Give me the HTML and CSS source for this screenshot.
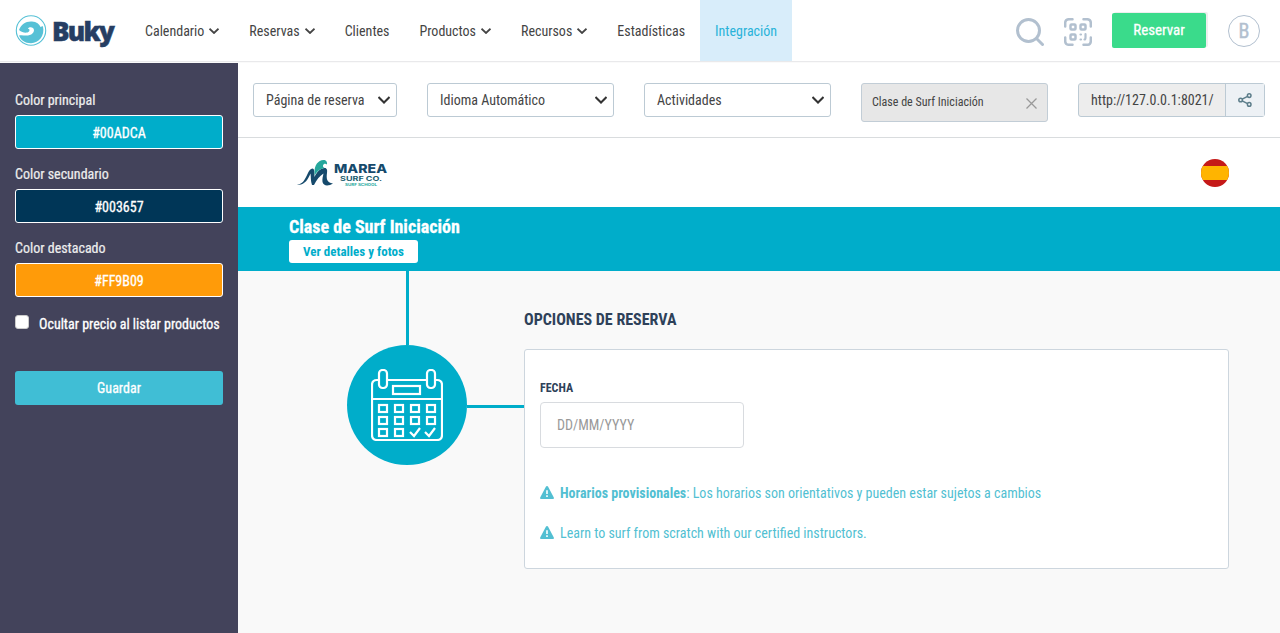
FILE: index.html
```html
<!DOCTYPE html>
<html lang="es">
<head>
    <meta charset="utf-8">
    <title>Buky - Integración</title>
    <link rel="stylesheet" href="styles.css">
</head>
<body>
    <header class="header">
        <a class="brand">
            <svg class="brand-icon" width="32" height="32" viewBox="0 0 32 32">
                <circle cx="16" cy="15.500" r="14.700" fill="none" stroke="#56c1d6" stroke-width="1.100"/>
                <path d="M4 15C6 9.500 11 6 17 6.500C21.500 6.900 24.500 9 25.500 12C26.500 11.500 27.500 11 28 11.500C30 20.500 24 28.200 16 28.200C10 28.200 5.500 25 4 20.500C7 19.500 9.500 21 13 20.500C18 19.800 20.500 15.500 18 13C16.500 11.800 14 12 12.800 13.500C14.500 13.800 15 15.200 14 16.500C12 18.500 7.500 18 4 15Z" fill="#56c1d6"/>
            </svg>
            <span class="brand-name">Buky</span>
        </a>
        <nav class="nav">
            <a class="nav-item">Calendario <svg class="caret" viewBox="0 0 10 6"><path d="M.5.7 5 5 9.500.7"/></svg></a>
            <a class="nav-item">Reservas <svg class="caret" viewBox="0 0 10 6"><path d="M.5.7 5 5 9.500.7"/></svg></a>
            <a class="nav-item">Clientes</a>
            <a class="nav-item">Productos <svg class="caret" viewBox="0 0 10 6"><path d="M.5.7 5 5 9.500.7"/></svg></a>
            <a class="nav-item">Recursos <svg class="caret" viewBox="0 0 10 6"><path d="M.5.7 5 5 9.500.7"/></svg></a>
            <a class="nav-item">Estadísticas</a>
            <a class="nav-item active">Integración</a>
        </nav>
        <div class="actions">
            <svg class="icon-search" width="28" height="28" viewBox="0 0 28 28" fill="none" stroke="#b2c0cf" stroke-width="3" stroke-linecap="round">
                <circle cx="12.500" cy="12.500" r="11"/>
                <path d="M20.500 20.500 26.500 26.500"/>
            </svg>
            <svg class="icon-qr" width="28" height="28" viewBox="0 0 28 28" fill="none" stroke="#b2c0cf" stroke-width="2.500" stroke-linecap="round">
                <path d="M1.200 8.500V5Q1.200 1.200 5 1.200H8.500M19.500 1.200H23Q26.800 1.200 26.800 5V8.500M26.800 19.500V23Q26.800 26.800 23 26.800H19.500M8.500 26.800H5Q1.200 26.800 1.200 23V19.500"/>
                <rect x="6.500" y="6.500" width="5" height="5" rx="1"/>
                <rect x="16.500" y="6.500" width="5" height="5" rx="1"/>
                <rect x="6.500" y="16.500" width="5" height="5" rx="1"/>
                <path d="M16.500 16.500H17M16.500 21.500H17M21.500 16.200V19.500Q21.500 21.500 20.500 21.500" stroke-width="2.200"/>
            </svg>
            <button class="btn-book">Reservar</button>
            <span class="avatar">B</span>
        </div>
    </header>

    <div class="page">
        <aside class="sidebar">
            <label class="color-label">Color principal</label>
            <div class="color-box color-main">#00ADCA</div>
            <label class="color-label">Color secundario</label>
            <div class="color-box color-second">#003657</div>
            <label class="color-label">Color destacado</label>
            <div class="color-box color-highlight">#FF9B09</div>
            <label class="check-row"><input type="checkbox" class="check"><span>Ocultar precio al listar productos</span></label>
            <button class="btn-save">Guardar</button>
        </aside>

        <main class="content">
            <div class="toolbar">
                <div class="select select-page"><span>Página de reserva</span><svg class="select-caret" viewBox="0 0 12 8"><path d="M.5 1 6 6.500 11.500 1"/></svg></div>
                <div class="select"><span>Idioma Automático</span><svg class="select-caret" viewBox="0 0 12 8"><path d="M.5 1 6 6.500 11.500 1"/></svg></div>
                <div class="select"><span>Actividades</span><svg class="select-caret" viewBox="0 0 12 8"><path d="M.5 1 6 6.500 11.500 1"/></svg></div>
                <div class="picked"><span>Clase de Surf Iniciación</span><svg width="11" height="11" viewBox="0 0 11 11"><path d="M.5.500 10.500 10.500M10.500.500.500 10.500" stroke="#999" stroke-width="1.300"/></svg></div>
                <div class="share">
                    <span class="share-url">http://127.0.0.1:8021/</span>
                    <span class="share-btn">
                        <svg width="14" height="14" viewBox="0 0 14 14" fill="none" stroke="#5c7d8a" stroke-width="1.500">
                            <circle cx="2.600" cy="7" r="1.800"/>
                            <circle cx="11.200" cy="2.600" r="1.800"/>
                            <circle cx="11.200" cy="11.400" r="1.800"/>
                            <path d="M4.200 6.200 9.600 3.400M4.200 7.800 9.600 10.600"/>
                        </svg>
                    </span>
                </div>
            </div>

            <div class="shop-head">
                <svg class="shop-logo" width="92" height="30" viewBox="0 0 92 30">
                    <path d="M1 26.500C7 26.500 9 21 11.500 16C13 12.800 14.500 10.500 16.500 10.500C18.500 10.500 18.500 14 18.500 19C21 13.500 24 10.800 28 10C31 9.500 31.500 12 31 15C30.300 20 30.500 25 37 25.500C33 28 27.500 28.500 26.500 24C26 21 27 18 27.500 15.500C23.500 18 20.500 22 18 27H16C14.500 23 15 19 14.500 15.500C12 21.500 8 28 1 26.500Z" fill="#164a6c"/>
                    <path d="M18.500 14C18.500 7 22 2.500 27.500 2C30 2 31.500 4 31 6.500C29.500 5 27.500 5.500 27 7.500C26.800 9 27.800 10 29 10C25 10.500 21.500 12.500 18.700 17.500Z" fill="#25a79c"/>
                    <text x="38" y="14.500" class="logo-title" textLength="53" lengthAdjust="spacingAndGlyphs">MAREA</text>
                    <text x="44" y="22.500" class="logo-sub" textLength="42" lengthAdjust="spacingAndGlyphs">SURF CO.</text>
                    <text x="49" y="27.800" class="logo-small" textLength="32" lengthAdjust="spacingAndGlyphs">SURF SCHOOL</text>
                </svg>
                <svg class="flag" width="28" height="28" viewBox="0 0 28 28">
                    <clipPath id="round"><circle cx="14" cy="14" r="14"/></clipPath>
                    <g clip-path="url(#round)">
                        <path fill="#c51918" d="M0 0h28v28H0z"/>
                        <path fill="#ffb400" d="M0 7h28v14H0z"/>
                    </g>
                </svg>
            </div>

            <div class="product-bar">
                <h1 class="product-title">Clase de Surf Iniciación</h1>
                <button class="btn-details">Ver detalles y fotos</button>
            </div>

            <div class="booking">
                <div class="step">
                    <div class="line-down"></div>
                    <div class="step-row">
                        <div class="step-circle">
                            <svg width="72" height="72" viewBox="0 0 72 72" fill="none" stroke="#fff" stroke-width="2.200">
                                <path d="M7 11H6Q1 11 1 16V66Q1 71 6 71H66Q71 71 71 66V16Q71 11 66 11H65M16 11H55M1 30H71"/>
                                <rect x="8" y="1" width="8" height="18" rx="3.500"/>
                                <rect x="56" y="1" width="8" height="18" rx="3.500"/>
                                <rect x="22" y="17" width="27" height="8"/>
                                <g>
                                    <rect x="8" y="36" width="8" height="7"/><rect x="24" y="36" width="8" height="7"/><rect x="40" y="36" width="8" height="7"/><rect x="56" y="36" width="8" height="7"/>
                                    <rect x="8" y="48" width="8" height="7"/><rect x="24" y="48" width="8" height="7"/><rect x="40" y="48" width="8" height="7"/><rect x="56" y="48" width="8" height="7"/>
                                    <rect x="8" y="60" width="8" height="7"/><rect x="24" y="60" width="8" height="7"/>
                                    <path d="M39 63 43 67 49 59M54 63 58 67 64 59"/>
                                </g>
                            </svg>
                        </div>
                        <div class="line-right"></div>
                    </div>
                </div>
                <section class="options">
                    <h2 class="options-title">OPCIONES DE RESERVA</h2>
                    <div class="card">
                        <label class="date-label">FECHA</label>
                        <input class="date-input" type="text" placeholder="DD/MM/YYYY">
                        <p class="notice"><svg class="warn" viewBox="0 0 14 13"><path d="M7 0Q7.700 0 8 .6L13.800 11.500Q14.300 13 13 13H1Q-.3 13 .2 11.500L6 .6Q6.300 0 7 0Z" fill="#52bfd2"/><path d="M7 4.300V8M7 9.300V11" stroke="#fff" stroke-width="1.600"/></svg><span><b>Horarios provisionales</b>: Los horarios son orientativos y pueden estar sujetos a cambios</span></p>
                        <p class="notice"><svg class="warn" viewBox="0 0 14 13"><path d="M7 0Q7.700 0 8 .6L13.800 11.500Q14.300 13 13 13H1Q-.3 13 .2 11.500L6 .6Q6.300 0 7 0Z" fill="#52bfd2"/><path d="M7 4.300V8M7 9.300V11" stroke="#fff" stroke-width="1.600"/></svg><span>Learn to surf from scratch with our certified instructors.</span></p>
                    </div>
                </section>
            </div>
        </main>
    </div>
</body>
</html>
```
FILE: styles.css
```css
* {
    box-sizing: border-box;
}

body {
    margin: 0;
    height: 633px;
    overflow: hidden;
    display: flex;
    flex-direction: column;
    font-family: "Roboto Condensed", Roboto, sans-serif;
    font-stretch: 75%;
    font-size: 14px;
    color: #444;
    background-color: #fff;
}

button,
input {
    font: inherit;
}

/* header */
.header {
    display: flex;
    flex: none;
    height: 63px;
    border-bottom: 1px solid #fafafa;
    box-shadow: inset 0 -1px 0 #e9e9eb;
}

.brand {
    display: flex;
    width: 130px;
    padding: 15px 0 0 15px;
}

.brand-name {
    margin-left: 5px;
    font-family: "Open Sans", sans-serif;
    font-stretch: 100%;
    font-weight: 800;
    font-size: 26px;
    line-height: 32px;
    letter-spacing: -1.7px;
    color: #263e63;
    -webkit-text-stroke: 0.5px #263e63;
}

.nav {
    display: flex;
}

.nav-item {
    display: flex;
    align-items: center;
    height: 61px;
    padding: 1px 15px 0;
}

.nav-item.active {
    color: #29b3d9;
    background-color: #d8edfa;
}

.caret {
    width: 10px;
    height: 6px;
    margin-left: 5px;
    fill: none;
    stroke: #444;
    stroke-width: 1.8;
}

.actions {
    display: flex;
    margin-left: auto;
    padding-right: 20px;
}

.icon-search {
    margin: 18px 20px 0 0;
}

.icon-qr {
    margin: 18px 20px 0 0;
}

.btn-book {
    width: 94px;
    height: 35px;
    margin: 13px 22px 0 0;
    padding: 0 0 1px;
    border: 0;
    border-radius: 2px;
    font-size: 15px;
    color: #fff;
    background-color: #3adb8b;
    box-shadow: 2px -1px 0 #eee;
    -webkit-text-stroke: 0.3px #fff;
}

.avatar {
    width: 32px;
    height: 32px;
    margin-top: 15px;
    border: 1px solid #b2c0cf;
    border-radius: 50%;
    font-size: 20px;
    line-height: 31px;
    text-align: center;
    color: #b2c0cf;
    -webkit-text-stroke: 0.4px #b2c0cf;
}

.page {
    display: flex;
    flex: 1;
}

/* sidebar */
.sidebar {
    display: flex;
    flex-direction: column;
    width: 238px;
    padding: 27px 15px 0;
    color: #eee;
    background-color: #43435b;
}

.color-label {
    height: 25px;
    line-height: 20px;
    -webkit-text-stroke: 0.2px #eee;
}

.color-box {
    height: 34px;
    margin-bottom: 15px;
    border: 1px solid #fff;
    border-radius: 3px;
    line-height: 34px;
    text-align: center;
    color: #fff;
    -webkit-text-stroke: 0.3px #fff;
}

.color-main {
    background-color: #00adca;
}

.color-second {
    background-color: #003657;
}

.color-highlight {
    background-color: #ff9b09;
}

.check-row {
    display: flex;
    height: 24px;
    line-height: 24px;
    white-space: nowrap;
    color: #fff;
    -webkit-text-stroke: 0.3px #fff;
}

.check {
    appearance: none;
    flex: none;
    width: 14px;
    height: 14px;
    margin: 3px 10px 0 0;
    border: 1px solid #ccc;
    border-radius: 3px;
    background-color: #fff;
}

.btn-save {
    height: 34px;
    margin-top: 35px;
    border: 0;
    border-radius: 3px;
    color: #fff;
    background-color: #40bed5;
    -webkit-text-stroke: 0.3px #fff;
}

/* toolbar */
.content {
    display: flex;
    flex: 1;
    flex-direction: column;
}

.toolbar {
    display: flex;
    gap: 30px;
    height: 75px;
    padding: 20px 15px 0;
    border-bottom: 1px solid #d9dcde;
}

.select {
    display: flex;
    align-items: center;
    justify-content: space-between;
    width: 187px;
    height: 34px;
    padding: 0 6px 0 12px;
    border: 1px solid #bccad4;
    border-radius: 3px;
    white-space: nowrap;
}

.select-page {
    width: 144px;
}

.select-caret {
    width: 12px;
    height: 8px;
    margin-top: -1px;
    fill: none;
    stroke: #333;
    stroke-width: 2;
}

.picked {
    display: flex;
    align-items: center;
    justify-content: space-between;
    width: 187px;
    height: 39px;
    padding: 0 10px;
    border: 1px solid #c2cdd6;
    border-radius: 3px;
    font-size: 12px;
    background-color: #e7e7e7;
}

.picked span {
    margin-top: -2px;
}

.picked svg {
    margin-top: 2px;
}

.share {
    display: flex;
    width: 187px;
    height: 34px;
    border: 1px solid #bccad4;
    border-radius: 3px;
    line-height: 33px;
    background-color: #ededed;
}

.share-url {
    width: 147px;
    padding-left: 12px;
    border-right: 1px solid #bccad4;
}

.share-btn {
    display: flex;
    flex: 1;
    align-items: center;
    justify-content: center;
    background-color: #edf1f5;
}

/* booking preview */
.shop-head {
    display: flex;
    align-items: center;
    justify-content: space-between;
    height: 69px;
    padding: 0 51px 0 58px;
}

.logo-title {
    font: 800 12px Inter, sans-serif;
    fill: #164a6c;
}

.logo-sub {
    font: 700 6.5px Inter, sans-serif;
    fill: #20606f;
}

.logo-small {
    font: 700 3.8px Inter, sans-serif;
    fill: #25a79c;
}

.product-bar {
    height: 64px;
    padding: 9px 51px 0;
    color: #fff;
    background-color: #00adca;
}

.product-title {
    margin: 0 0 2px;
    font-size: 18px;
    line-height: 22px;
    -webkit-text-stroke: 0.3px #fff;
}

.btn-details {
    display: block;
    width: 129px;
    height: 23px;
    padding: 0;
    border: 0;
    border-radius: 3px;
    font-size: 13px;
    font-weight: 700;
    color: #00adca;
    background-color: #fff;
}

.booking {
    display: flex;
    flex: 1;
    padding: 0 51px 0 109px;
    background-color: #f9f9f9;
}

.step {
    width: 177px;
}

.line-down {
    width: 3px;
    height: 74px;
    margin-left: 59px;
    background-color: #00adca;
}

.step-row {
    display: flex;
    align-items: center;
}

.step-circle {
    display: flex;
    align-items: center;
    justify-content: center;
    width: 120px;
    height: 120px;
    border-radius: 50%;
    background-color: #00adca;
}

.line-right {
    flex: 1;
    height: 3px;
    margin-top: 3px;
    background-color: #00adca;
}

.options {
    flex: 1;
}

.options-title {
    margin: 38px 0 18px;
    font-size: 16px;
    line-height: 22px;
    color: #2e4159;
}

.card {
    height: 220px;
    padding: 29px 15px 0;
    border: 1px solid #cdd6de;
    border-radius: 3px;
    background-color: #fff;
}

.date-label {
    display: block;
    height: 23px;
    font-size: 12px;
    font-weight: 700;
    line-height: 18px;
    color: #2e4159;
}

.date-input {
    display: block;
    width: 204px;
    height: 46px;
    margin-bottom: 35px;
    padding: 0 16px;
    border: 1px solid #d8dbdf;
    border-radius: 4px;
}

.date-input::placeholder {
    color: #999;
}

.notice {
    display: flex;
    align-items: center;
    margin: 0 0 20px;
    line-height: 20px;
    color: #52bfd2;
}

.warn {
    width: 14px;
    height: 13px;
    margin: -1px 6px 0 0;
}
```
